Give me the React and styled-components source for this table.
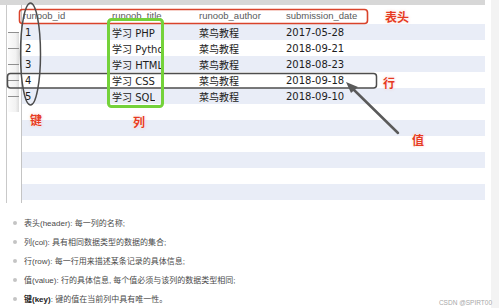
import React from "react";
import styled, { createGlobalStyle } from "styled-components";

const Global = createGlobalStyle`
  html, body { margin: 0; padding: 0; background: #fff; }
  body { width: 499px; height: 308px; overflow: hidden; }
`;

const Page = styled.div`
  position: relative;
  width: 499px;
  height: 308px;
  display: flex;
  background: #fff;
  overflow: hidden;
`;

const Main = styled.div`
  width: 491px;
  display: flex;
  flex-direction: column;
`;

const Strip = styled.div`
  flex: 1;
  background: #f3f3f3;
`;

const Shot = styled.div`
  width: 485px;
  display: flex;
  flex-direction: column;
`;

const TopBar = styled.div`
  height: 5px;
  background: #d7d7d7;
`;

const ShotBody = styled.div`
  height: 198px;
  display: flex;
`;

const Gutter = styled.div`
  margin-left: 6px;
  width: 14px;
  border-left: 1px solid #c9c9c9;
  padding-top: 27px;
  display: flex;
  flex-direction: column;
`;

const Handle = styled.div`
  height: 15px;
  margin-left: 1px;
  width: 11px;
  border-top: 1px solid #8f8f8f;
  background: linear-gradient(to right, #fbfbfb 0%, #f2f2f2 70%, #dcdcdc 100%);
`;

const Table = styled.div`
  flex: 1;
  border-left: 1px solid #c4c4c4;
  display: flex;
  flex-direction: column;
`;

const cols = "89px 87px 87px 1fr";

const HeaderRow = styled.div`
  height: 19px;
  display: grid;
  grid-template-columns: ${cols};
  align-items: center;
  background: #fff;
`;

const HeadCell = styled.div`
  padding-left: 1px;
  padding-top: 1px;
  font-family: "Liberation Sans", Arial, sans-serif;
  font-size: 9.5px;
  color: #5a5a5a;
  white-space: nowrap;
  overflow: hidden;
`;

const Row = styled.div`
  height: 16px;
  display: grid;
  grid-template-columns: ${cols};
  align-items: center;
  background: ${(p) => (p.$striped ? "#e9edf7" : "#ffffff")};
`;

const Cell = styled.div`
  padding-left: ${(p) => (p.$inset ? 3 : 1)}px;
  font-family: "DejaVu Sans", "Noto Sans CJK SC", sans-serif;
  font-size: 10px;
  color: #1c1c1c;
  white-space: nowrap;
  overflow: hidden;
`;

const Clip = styled.span`
  display: inline-block;
  max-width: 51px;
  overflow: hidden;
  vertical-align: top;
`;

const List = styled.ul`
  list-style: none;
  margin: 0;
  padding: 10px 0 0 13px;
  display: flex;
  flex-direction: column;
`;

const Item = styled.li`
  height: 19px;
  display: flex;
  align-items: center;
  gap: 7px;
  font-family: "Liberation Sans", "Noto Sans CJK SC", sans-serif;
  font-size: 8px;
  color: #4a4a4a;
  white-space: nowrap;
`;

const Dot = styled.span`
  width: 4px;
  height: 4px;
  border-radius: 50%;
  background: #c4c4c4;
  flex: none;
`;

const Strong = styled.b`
  color: #222;
  font-weight: 700;
`;

const Overlay = styled.svg`
  position: absolute;
  left: 0;
  top: 0;
  width: 499px;
  height: 308px;
  pointer-events: none;
`;

const Label = styled.span`
  position: absolute;
  left: ${(p) => p.$x}px;
  top: ${(p) => p.$y}px;
  font-family: "Noto Sans CJK SC", sans-serif;
  font-weight: 700;
  font-size: 12px;
  line-height: 14px;
  color: #e63a22;
  text-shadow: 0 0 1px #fff, 0 0 2px #fff, 0 0 3px rgba(230, 90, 70, 0.35);
`;

const Watermark = styled.span`
  position: absolute;
  right: 7px;
  bottom: 2px;
  font-family: "Liberation Sans", Arial, sans-serif;
  font-size: 6.5px;
  color: #a8a8a8;
`;

const data = [
  ["1", "学习 PHP", "菜鸟教程", "2017-05-28"],
  ["2", "学习 Python", "菜鸟教程", "2018-09-21"],
  ["3", "学习 HTML", "菜鸟教程", "2018-08-23"],
  ["4", "学习 CSS", "菜鸟教程", "2018-09-18"],
  ["5", "学习 SQL", "菜鸟教程", "2018-09-10"],
];

const rows = Array.from({ length: 11 }, (_, i) => data[i] || null);

export default function App() {
  return (
    <>
      <Global />
      <Page>
        <Main>
          <Shot>
            <TopBar />
            <ShotBody>
              <Gutter>
                {data.map((d) => (
                  <Handle key={d[0]} />
                ))}
              </Gutter>
              <Table>
                <HeaderRow>
                  <HeadCell>runoob_id</HeadCell>
                  <HeadCell>runoob_title</HeadCell>
                  <HeadCell>runoob_author</HeadCell>
                  <HeadCell>submission_date</HeadCell>
                </HeaderRow>
                {rows.map((r, i) => (
                  <Row key={i} $striped={i % 2 === 0}>
                    {r && (
                      <>
                        <Cell $inset>{r[0]}</Cell>
                        <Cell>
                          <Clip>{r[1]}</Clip>
                        </Cell>
                        <Cell>{r[2]}</Cell>
                        <Cell>{r[3]}</Cell>
                      </>
                    )}
                  </Row>
                ))}
              </Table>
            </ShotBody>
          </Shot>
          <List>
            <Item><Dot />表头(header): 每一列的名称;</Item>
            <Item><Dot />列(col): 具有相同数据类型的数据的集合;</Item>
            <Item><Dot />行(row): 每一行用来描述某条记录的具体信息;</Item>
            <Item><Dot />值(value): 行的具体信息, 每个值必须与该列的数据类型相同;</Item>
            <Item><Dot /><span><Strong>键(key)</Strong>: 键的值在当前列中具有唯一性。</span></Item>
          </List>
        </Main>
        <Strip />

        <Overlay viewBox="0 0 499 308">
          <rect x="19.5" y="9.5" width="348" height="14" rx="3" fill="none" stroke="#d9432b" strokeWidth="1.6" />
          <rect x="7.5" y="73.5" width="369" height="14.5" rx="3" fill="none" stroke="#4d4d4d" strokeWidth="1.5" />
          <ellipse cx="30.5" cy="54" rx="10" ry="51" fill="none" stroke="#4d4d4d" strokeWidth="1.5" />
          <rect x="108.5" y="19.5" width="54" height="87" rx="3" fill="none" stroke="#74d23a" strokeWidth="3" />
          <line x1="398" y1="133" x2="352" y2="88" stroke="#5a5a5a" strokeWidth="2.5" strokeLinecap="round" />
          <polygon points="346,82 358,87 351,93" fill="#5a5a5a" />
        </Overlay>
        <Label $x={385} $y={10}>表头</Label>
        <Label $x={383} $y={76}>行</Label>
        <Label $x={412} $y={133}>值</Label>
        <Label $x={30} $y={113}>键</Label>
        <Label $x={133} $y={115}>列</Label>
        <Watermark>CSDN @SPIRT00</Watermark>
      </Page>
    </>
  );
}
